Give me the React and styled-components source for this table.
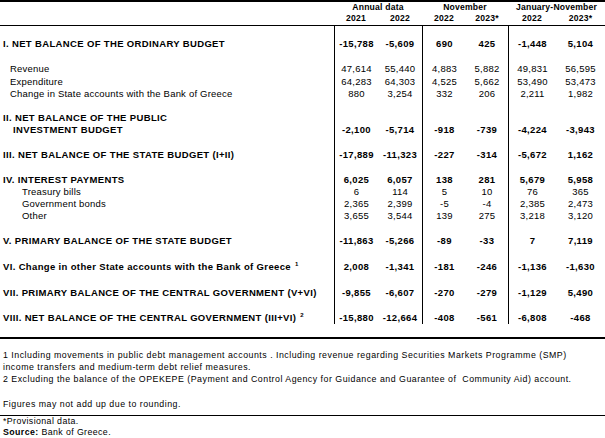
import React from 'react'
import styled, { createGlobalStyle } from 'styled-components'

const GlobalStyle = createGlobalStyle`
    body {
        margin: 0;
        background: #fff;
        color: #000;
        font-family: "Liberation Sans", Arial, sans-serif;
    }
`

const COLS = '334px 44px 44px 44px 42px 48px 49px'

const Page = styled.div`
    width: 605px;
`

const Header = styled.div`
    display: grid;
    grid-template-columns: ${COLS};
    grid-template-rows: 10px 10px;
    row-gap: 1px;
    padding: 0 0 2px;
    border-top: 2px solid #000;
    border-bottom: 1px solid #000;
    font-size: 8.6px;
    font-weight: bold;
    letter-spacing: 0.2px;
    line-height: 10px;
`

const HeadBlank = styled.div`
    grid-row: 1 / span 2;
`

const GroupLabel = styled.div`
    grid-column: span 2;
    text-align: center;
`

const Year = styled.div`
    text-align: center;
`

const Row = styled.div`
    display: grid;
    grid-template-columns: ${COLS};
    height: ${(p) => p.$h}px;
    font-size: 9.5px;
    font-weight: ${(p) => (p.$bold ? 'bold' : 'normal')};
    letter-spacing: ${(p) => (p.$bold ? '0.35px' : '0.2px')};
    line-height: 12px;
`

const Label = styled.div`
    display: flex;
    flex-direction: column;
    justify-content: flex-end;
    padding-left: ${(p) => [3, 10, 22][p.$indent || 0]}px;
    white-space: nowrap;
`

const Cont = styled.span`
    padding-left: 10px;
`

const Value = styled.div`
    display: flex;
    align-items: flex-end;
    justify-content: center;
    border-left: ${(p) => (p.$rule ? '1px solid #000' : 'none')};
    white-space: nowrap;
`

const Sup = styled.sup`
    font-size: 6px;
    line-height: 0;
    margin-left: 4px;
`

const BodyEnd = styled.div`
    height: 13px;
    border-bottom: 2px solid #000;
`

const Notes = styled.div`
    padding: 10px 3px 0;
    font-size: 8.8px;
    letter-spacing: 0.5px;
    line-height: 12px;
    white-space: pre;
`

const NoteGap = styled.div`
    height: 13px;
`

const Rounding = styled.div`
    padding: 0 3px 5px;
    font-size: 8.8px;
    letter-spacing: 0.5px;
    line-height: 12px;
`

const Source = styled.div`
    border-top: 1px solid #000;
    padding: 0 3px;
    font-size: 8.8px;
    letter-spacing: 0.4px;
    line-height: 11px;
`

const rows = [
    { label: 'I. NET BALANCE OF THE ORDINARY BUDGET', bold: true, h: 24, v: ['-15,788', '-5,609', '690', '425', '-1,448', '5,104'] },
    { label: 'Revenue', indent: 1, h: 25, v: ['47,614', '55,440', '4,883', '5,882', '49,831', '56,595'] },
    { label: 'Expenditure', indent: 1, h: 13, v: ['64,283', '64,303', '4,525', '5,662', '53,490', '53,473'] },
    { label: 'Change in State accounts with the Bank of Greece', indent: 1, h: 12, v: ['880', '3,254', '332', '206', '2,211', '1,982'] },
    { label: 'II. NET BALANCE OF THE PUBLIC', cont: 'INVESTMENT BUDGET', bold: true, h: 36, v: ['-2,100', '-5,714', '-918', '-739', '-4,224', '-3,943'] },
    { label: 'III. NET BALANCE OF THE STATE BUDGET (I+II)', bold: true, h: 25, v: ['-17,889', '-11,323', '-227', '-314', '-5,672', '1,162'] },
    { label: 'IV. INTEREST PAYMENTS', bold: true, h: 25, v: ['6,025', '6,057', '138', '281', '5,679', '5,958'] },
    { label: 'Treasury bills', indent: 2, h: 12, v: ['6', '114', '5', '10', '76', '365'] },
    { label: 'Government bonds', indent: 2, h: 12, v: ['2,365', '2,399', '-5', '-4', '2,385', '2,473'] },
    { label: 'Other', indent: 2, h: 12, v: ['3,655', '3,544', '139', '275', '3,218', '3,120'] },
    { label: 'V. PRIMARY BALANCE OF THE STATE BUDGET', bold: true, h: 25, v: ['-11,863', '-5,266', '-89', '-33', '7', '7,119'] },
    { label: 'VI. Change in other State accounts with the Bank of Greece', note: '1', bold: true, h: 26, v: ['2,008', '-1,341', '-181', '-246', '-1,136', '-1,630'] },
    { label: 'VII. PRIMARY BALANCE OF THE CENTRAL GOVERNMENT (V+VI)', bold: true, h: 26, v: ['-9,855', '-6,607', '-270', '-279', '-1,129', '5,490'] },
    { label: 'VIII. NET BALANCE OF THE CENTRAL GOVERNMENT (III+VI)', note: '2', bold: true, h: 25, v: ['-15,880', '-12,664', '-408', '-561', '-6,808', '-468'] },
]

// vertical rules sit left of 2021, Nov 2022 and Jan-Nov 2022
const RULED = [true, false, true, false, true, false]

const App = () => (
    <Page>
        <GlobalStyle />
        <Header>
            <HeadBlank />
            <GroupLabel>Annual data</GroupLabel>
            <GroupLabel>November</GroupLabel>
            <GroupLabel>January-November</GroupLabel>
            {['2021', '2022', '2022', '2023*', '2022', '2023*'].map((y, i) => (
                <Year key={i}>{y}</Year>
            ))}
        </Header>

        {rows.map((r) => (
            <Row key={r.label} $h={r.h} $bold={r.bold}>
                <Label $indent={r.indent}>
                    <span>
                        {r.label}
                        {r.note && <Sup>{r.note}</Sup>}
                    </span>
                    {r.cont && <Cont>{r.cont}</Cont>}
                </Label>
                {r.v.map((val, i) => (
                    <Value key={i} $rule={RULED[i]}>{val}</Value>
                ))}
            </Row>
        ))}
        <BodyEnd />

        <Notes>
            <div>1 Including movements in public debt management accounts . Including revenue regarding Securities Markets Programme (SMP)</div>
            <div>income transfers and medium-term debt relief measures.</div>
            <div>2 Excluding the balance of the OPEKEPE (Payment and Control Agency for Guidance and Guarantee of  Community Aid) account.</div>
            <NoteGap />
        </Notes>
        <Rounding>Figures may not add up due to rounding.</Rounding>
        <Source>
            <div>*Provisional data.</div>
            <div><b>Source:</b> Bank of Greece.</div>
        </Source>
    </Page>
)

export default App
